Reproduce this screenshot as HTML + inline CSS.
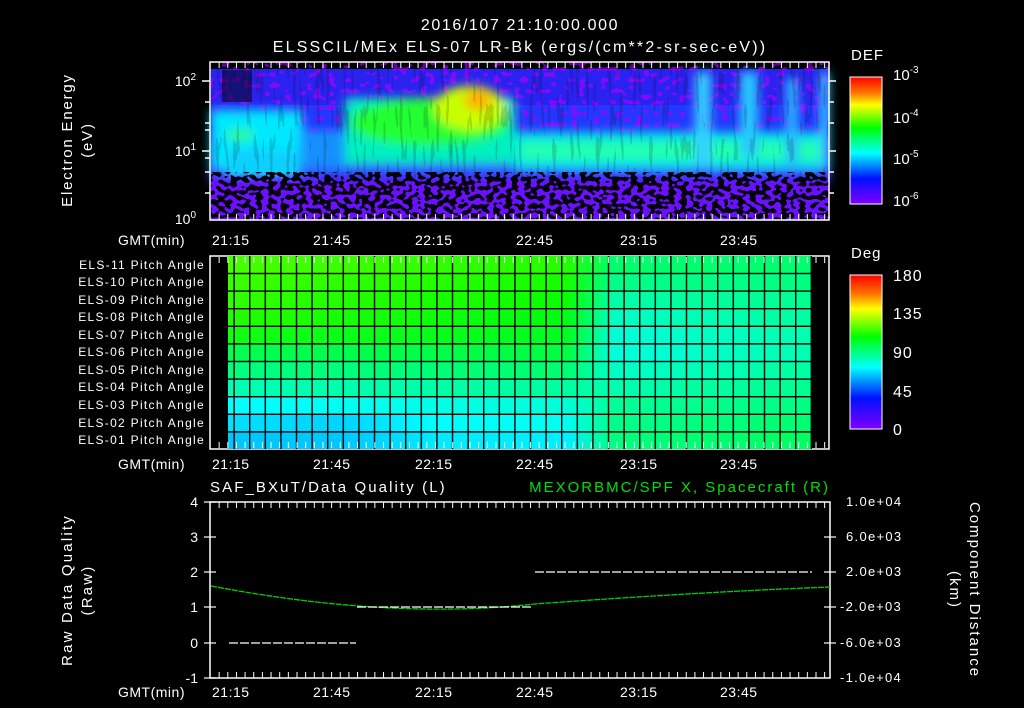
<!DOCTYPE html>
<html><head><meta charset="utf-8"><style>
html,body{margin:0;padding:0;background:#000;width:1024px;height:708px;overflow:hidden}
svg{display:block}
text{font-family:"Liberation Sans",sans-serif;fill:#fff}
</style></head><body>
<svg width="1024" height="708" viewBox="0 0 1024 708" xmlns="http://www.w3.org/2000/svg">
<defs>
<filter id="b4" filterUnits="userSpaceOnUse" x="150" y="40" width="760" height="200"><feGaussianBlur stdDeviation="5"/></filter>
<filter id="spk" filterUnits="userSpaceOnUse" x="211" y="172" width="618" height="48">
<feTurbulence type="fractalNoise" baseFrequency="0.16 0.22" numOctaves="1" seed="3"/>
<feColorMatrix type="matrix" values="0 0 0 0 0  0 0 0 0 0  0 0 0 0 0  1 0 0 0 0"/>
<feComponentTransfer><feFuncA type="discrete" tableValues="0 0 0 1 1 1"/></feComponentTransfer>
</filter>
<filter id="str" filterUnits="userSpaceOnUse" x="211" y="62" width="618" height="158">
<feTurbulence type="fractalNoise" baseFrequency="0.3 0.03" numOctaves="1" seed="7"/>
<feColorMatrix type="matrix" values="0 0 0 0 0  0 0 0 0 0  0 0 0 0 0  1 0 0 0 0"/>
<feComponentTransfer><feFuncA type="discrete" tableValues="0 0 0 0.15 0.3"/></feComponentTransfer>
</filter>
<filter id="pur" filterUnits="userSpaceOnUse" x="211" y="62" width="618" height="158">
<feTurbulence type="fractalNoise" baseFrequency="0.14 0.18" numOctaves="1" seed="11"/>
<feColorMatrix type="matrix" values="0 0 0 0 0.4  0 0 0 0 0  0 0 0 0 1  1 0 0 0 0"/>
<feComponentTransfer><feFuncA type="discrete" tableValues="0 0 0 0.8 1"/></feComponentTransfer>
</filter>
<linearGradient id="cb" x1="0" y1="0" x2="0" y2="1">
<stop offset="0" stop-color="#ff0000"/><stop offset="0.12" stop-color="#ff7000"/><stop offset="0.22" stop-color="#ffff00"/>
<stop offset="0.4" stop-color="#00ff00"/><stop offset="0.6" stop-color="#00ffff"/><stop offset="0.8" stop-color="#0010ff"/><stop offset="1" stop-color="#8000ff"/>
</linearGradient>
<linearGradient id="fade" x1="0" y1="0" x2="0" y2="1"><stop offset="0" stop-color="#6a10ff" stop-opacity="0"/><stop offset="0.25" stop-color="#6a10ff"/><stop offset="1" stop-color="#6a10ff"/></linearGradient>
<pattern id="vg" x="233.4" y="0" width="15.6" height="10" patternUnits="userSpaceOnUse"><rect x="0" y="0" width="1.4" height="10" fill="#000"/></pattern>
<linearGradient id="r1" x1="0" x2="1"><stop offset="0" stop-color="#48ff00"/><stop offset="0.58" stop-color="#22ff00"/><stop offset="0.66" stop-color="#00ff6a"/><stop offset="1" stop-color="#00ff70"/></linearGradient>
<linearGradient id="r2" x1="0" x2="1"><stop offset="0" stop-color="#3aff00"/><stop offset="0.58" stop-color="#15ff00"/><stop offset="0.66" stop-color="#00ff88"/><stop offset="1" stop-color="#00ff80"/></linearGradient>
<linearGradient id="r3" x1="0" x2="1"><stop offset="0" stop-color="#30ff00"/><stop offset="0.58" stop-color="#08ff00"/><stop offset="0.66" stop-color="#00ffa8"/><stop offset="1" stop-color="#00ff90"/></linearGradient>
<linearGradient id="r4" x1="0" x2="1"><stop offset="0" stop-color="#22ff00"/><stop offset="0.58" stop-color="#00ff10"/><stop offset="0.66" stop-color="#00ffc4"/><stop offset="1" stop-color="#00ffa0"/></linearGradient>
<linearGradient id="r5" x1="0" x2="1"><stop offset="0" stop-color="#10ff10"/><stop offset="0.58" stop-color="#00ff20"/><stop offset="0.66" stop-color="#00ffd8"/><stop offset="1" stop-color="#00ffb0"/></linearGradient>
<linearGradient id="r6" x1="0" x2="1"><stop offset="0" stop-color="#00ff50"/><stop offset="0.58" stop-color="#00ff40"/><stop offset="0.66" stop-color="#00ffdc"/><stop offset="1" stop-color="#00ffb0"/></linearGradient>
<linearGradient id="r7" x1="0" x2="1"><stop offset="0" stop-color="#00ff80"/><stop offset="0.58" stop-color="#00ff70"/><stop offset="0.66" stop-color="#00ffc8"/><stop offset="1" stop-color="#00ffa0"/></linearGradient>
<linearGradient id="r8" x1="0" x2="1"><stop offset="0" stop-color="#00ffb4"/><stop offset="0.58" stop-color="#00ffa0"/><stop offset="0.66" stop-color="#00ffb0"/><stop offset="1" stop-color="#00ff90"/></linearGradient>
<linearGradient id="r9" x1="0" x2="1"><stop offset="0" stop-color="#00ffff"/><stop offset="0.58" stop-color="#00ffd8"/><stop offset="0.66" stop-color="#00ff98"/><stop offset="1" stop-color="#00ff80"/></linearGradient>
<linearGradient id="r10" x1="0" x2="1"><stop offset="0" stop-color="#00e0ff"/><stop offset="0.2" stop-color="#00d4ff"/><stop offset="0.35" stop-color="#00ffff"/><stop offset="0.58" stop-color="#00fff0"/><stop offset="0.66" stop-color="#00ff88"/><stop offset="1" stop-color="#00ff70"/></linearGradient>
<linearGradient id="r11" x1="0" x2="1"><stop offset="0" stop-color="#00c8ff"/><stop offset="0.2" stop-color="#00c8ff"/><stop offset="0.35" stop-color="#00eaff"/><stop offset="0.58" stop-color="#00f0ff"/><stop offset="0.66" stop-color="#00ff80"/><stop offset="1" stop-color="#00ff60"/></linearGradient>
<pattern id="tkx" x="210" y="0" width="8.65" height="10" patternUnits="userSpaceOnUse"><rect x="0" y="0" width="1" height="10" fill="#fff"/></pattern>
</defs>

<text x="520" y="30" font-size="16" text-anchor="middle" letter-spacing="1.6">2016/107 21:10:00.000</text>
<text x="520" y="52" font-size="16" text-anchor="middle" letter-spacing="2.2">ELSSCIL/MEx ELS-07 LR-Bk  (ergs/(cm**2-sr-sec-eV))</text>

<!-- TOP PANEL -->
<g>
<rect x="211" y="69" width="618" height="151" fill="#2436ff"/>
<rect x="211" y="69" width="618" height="36" fill="#2a22f0"/>
<rect x="211" y="69" width="618" height="151" fill="#fff" filter="url(#pur)" opacity="0.8"/>
<g filter="url(#b4)">
<rect x="211" y="165" width="618" height="18" fill="#2a50ff"/>
<rect x="211" y="110" width="92" height="58" fill="#00e8ff"/>
<rect x="228" y="150" width="70" height="34" fill="#10d0ff"/>
<rect x="300" y="130" width="50" height="38" fill="#1890ff"/>
<rect x="345" y="98" width="170" height="66" fill="#00f0c0"/>
<rect x="515" y="132" width="314" height="36" fill="#00e8e8"/>
<rect x="520" y="142" width="300" height="18" fill="#20ffb0"/>
<rect x="695" y="72" width="16" height="95" fill="#30d0ff"/>
<rect x="740" y="72" width="18" height="85" fill="#28c8ff"/>
<rect x="786" y="78" width="12" height="85" fill="#28b8ff"/>
<rect x="820" y="72" width="9" height="95" fill="#30d0ff"/>
<ellipse cx="430" cy="122" rx="80" ry="24" fill="#20ff30"/>
<ellipse cx="240" cy="135" rx="14" ry="5" fill="#30ff60"/>
<ellipse cx="470" cy="108" rx="36" ry="22" fill="#c8ff00"/>
<ellipse cx="478" cy="100" rx="14" ry="10" fill="#ffb000"/>
</g>
<rect x="222" y="70" width="30" height="32" fill="#000" opacity="0.5"/>
<rect x="211" y="69" width="618" height="151" fill="#000" filter="url(#str)"/>
<rect x="211" y="172" width="618" height="48" fill="url(#fade)"/>
<rect x="211" y="172" width="618" height="48" fill="#000" filter="url(#spk)" opacity="0.95"/>
<rect x="210" y="62" width="619" height="158" fill="none" stroke="#fff" stroke-width="1.5"/>
<rect x="211" y="62" width="618" height="6" fill="url(#tkx)"/>
<rect x="211" y="214" width="618" height="6" fill="url(#tkx)"/>
<g stroke="#fff" stroke-width="1.5">
<line x1="202" y1="81" x2="210" y2="81"/><line x1="202" y1="151" x2="210" y2="151"/>
<line x1="205" y1="102" x2="210" y2="102"/><line x1="205" y1="123" x2="210" y2="123"/><line x1="205" y1="130" x2="210" y2="130"/>
<line x1="205" y1="172" x2="210" y2="172"/><line x1="205" y1="193" x2="210" y2="193"/><line x1="205" y1="158" x2="210" y2="158"/>
<line x1="829" y1="81" x2="836" y2="81"/><line x1="829" y1="151" x2="836" y2="151"/><line x1="829" y1="102" x2="834" y2="102"/><line x1="829" y1="123" x2="834" y2="123"/><line x1="829" y1="172" x2="834" y2="172"/><line x1="829" y1="193" x2="834" y2="193"/>
</g>
</g>
<text x="196" y="86" font-size="14" text-anchor="end">10<tspan dy="-6" font-size="10">2</tspan></text>
<text x="196" y="156" font-size="14" text-anchor="end">10<tspan dy="-6" font-size="10">1</tspan></text>
<text x="196" y="224" font-size="14" text-anchor="end">10<tspan dy="-6" font-size="10">0</tspan></text>
<text transform="translate(72,140) rotate(-90)" font-size="15" text-anchor="middle" letter-spacing="1.8">Electron Energy</text>
<text transform="translate(92,140) rotate(-90)" font-size="15" text-anchor="middle" letter-spacing="1.8">(eV)</text>

<g font-size="14" letter-spacing="0.5">
<text x="118" y="245">GMT(min)</text>
<text x="212" y="245">21:15</text><text x="313" y="245">21:45</text><text x="415" y="245">22:15</text><text x="516" y="245">22:45</text><text x="620" y="245">23:15</text><text x="720" y="245">23:45</text>
</g>

<text x="851" y="60" font-size="15" letter-spacing="1">DEF</text>
<rect x="850" y="77" width="32" height="127" fill="url(#cb)" stroke="#fff" stroke-width="1"/>
<g font-size="15">
<text x="893" y="80">10<tspan dy="-7" font-size="10">-3</tspan></text>
<text x="893" y="123">10<tspan dy="-7" font-size="10">-4</tspan></text>
<text x="893" y="164">10<tspan dy="-7" font-size="10">-5</tspan></text>
<text x="893" y="206">10<tspan dy="-7" font-size="10">-6</tspan></text>
</g>

<!-- MIDDLE PANEL -->
<rect x="210" y="256" width="619" height="193" fill="#000" stroke="#fff" stroke-width="1.5"/>
<g>
<rect x="228" y="256" width="584" height="17.6" fill="url(#r1)"/>
<rect x="228" y="273.6" width="584" height="17.6" fill="url(#r2)"/>
<rect x="228" y="291.2" width="584" height="17.6" fill="url(#r3)"/>
<rect x="228" y="308.8" width="584" height="17.6" fill="url(#r4)"/>
<rect x="228" y="326.4" width="584" height="17.6" fill="url(#r5)"/>
<rect x="228" y="344" width="584" height="17.6" fill="url(#r6)"/>
<rect x="228" y="361.6" width="584" height="17.6" fill="url(#r7)"/>
<rect x="228" y="379.2" width="584" height="17.6" fill="url(#r8)"/>
<rect x="228" y="396.8" width="584" height="17.6" fill="url(#r9)"/>
<rect x="228" y="414.4" width="584" height="17.6" fill="url(#r10)"/>
<rect x="228" y="432" width="584" height="17" fill="url(#r11)"/>
<rect x="233" y="256" width="579" height="193" fill="url(#vg)"/>
<g fill="#000">
<rect x="228" y="272.8" width="584" height="1.4"/><rect x="228" y="290.4" width="584" height="1.4"/><rect x="228" y="308" width="584" height="1.4"/>
<rect x="228" y="325.6" width="584" height="1.4"/><rect x="228" y="343.2" width="584" height="1.4"/><rect x="228" y="360.8" width="584" height="1.4"/>
<rect x="228" y="378.4" width="584" height="1.4"/><rect x="228" y="396" width="584" height="1.4"/><rect x="228" y="413.6" width="584" height="1.4"/>
<rect x="228" y="431.2" width="584" height="1.4"/>
</g>
<rect x="211" y="257" width="618" height="6" fill="url(#tkx)"/>
<rect x="211" y="442" width="618" height="6" fill="url(#tkx)"/>
</g>
<g font-size="12" text-anchor="end" letter-spacing="1.3">
<text x="205" y="269">ELS-11 Pitch Angle</text>
<text x="205" y="286">ELS-10 Pitch Angle</text>
<text x="205" y="304">ELS-09 Pitch Angle</text>
<text x="205" y="321">ELS-08 Pitch Angle</text>
<text x="205" y="339">ELS-07 Pitch Angle</text>
<text x="205" y="356">ELS-06 Pitch Angle</text>
<text x="205" y="374">ELS-05 Pitch Angle</text>
<text x="205" y="391">ELS-04 Pitch Angle</text>
<text x="205" y="409">ELS-03 Pitch Angle</text>
<text x="205" y="427">ELS-02 Pitch Angle</text>
<text x="205" y="444">ELS-01 Pitch Angle</text>
</g>
<g font-size="14" letter-spacing="0.5">
<text x="118" y="469">GMT(min)</text>
<text x="212" y="469">21:15</text><text x="313" y="469">21:45</text><text x="415" y="469">22:15</text><text x="516" y="469">22:45</text><text x="620" y="469">23:15</text><text x="720" y="469">23:45</text>
</g>

<text x="851" y="258" font-size="15" letter-spacing="1">Deg</text>
<rect x="850" y="275" width="32" height="154" fill="url(#cb)" stroke="#fff" stroke-width="1"/>
<g font-size="16" letter-spacing="1">
<text x="893" y="281">180</text><text x="893" y="319">135</text><text x="893" y="358">90</text><text x="893" y="397">45</text><text x="893" y="435">0</text>
</g>

<!-- BOTTOM PANEL -->
<text x="210" y="492" font-size="15" letter-spacing="2.1">SAF_BXuT/Data Quality (L)</text>
<text x="830" y="492" font-size="15" text-anchor="end" letter-spacing="2" style="fill:#00e000">MEXORBMC/SPF X, Spacecraft (R)</text>
<rect x="210" y="502" width="620" height="176" fill="none" stroke="#fff" stroke-width="1.5"/>
<rect x="211" y="502" width="619" height="6" fill="url(#tkx)"/>
<rect x="211" y="672" width="619" height="6" fill="url(#tkx)"/>
<g stroke="#fff" stroke-width="1.2">
<line x1="204" y1="502" x2="216" y2="502"/><line x1="204" y1="537" x2="216" y2="537"/><line x1="204" y1="572" x2="216" y2="572"/><line x1="204" y1="607" x2="216" y2="607"/><line x1="204" y1="643" x2="216" y2="643"/><line x1="204" y1="678" x2="216" y2="678"/>
<line x1="824" y1="537" x2="836" y2="537"/><line x1="824" y1="572" x2="836" y2="572"/><line x1="824" y1="607" x2="836" y2="607"/><line x1="824" y1="643" x2="836" y2="643"/>
</g>
<path d="M211 586 Q390 620 535 604 Q700 592 830 587" fill="none" stroke="#00d000" stroke-width="1.3" stroke-dasharray="6 1"/>
<g stroke="#fff" stroke-width="1.2" stroke-dasharray="9 2">
<line x1="229" y1="643" x2="356" y2="643"/>
<line x1="357" y1="607" x2="533" y2="607"/>
<line x1="535" y1="572" x2="812" y2="572"/>
</g>
<g font-size="14" text-anchor="end">
<text x="198" y="507">4</text><text x="198" y="542">3</text><text x="198" y="577">2</text><text x="198" y="612">1</text><text x="198" y="648">0</text><text x="198" y="683">-1</text>
</g>
<g font-size="13" letter-spacing="1.3">
<text x="846" y="506">1.0e+04</text><text x="846" y="541">6.0e+03</text><text x="846" y="576">2.0e+03</text><text x="840" y="611">-2.0e+03</text><text x="840" y="647">-6.0e+03</text><text x="840" y="682">-1.0e+04</text>
</g>
<text transform="translate(72,590) rotate(-90)" font-size="15" text-anchor="middle" letter-spacing="2.2">Raw Data Quality</text>
<text transform="translate(92,590) rotate(-90)" font-size="15" text-anchor="middle" letter-spacing="2.2">(Raw)</text>
<text transform="translate(970,590) rotate(90)" font-size="15" text-anchor="middle" letter-spacing="2">Component Distance</text>
<text transform="translate(950,590) rotate(90)" font-size="15" text-anchor="middle" letter-spacing="2">(km)</text>
<g font-size="14" letter-spacing="0.5">
<text x="118" y="697">GMT(min)</text>
<text x="212" y="697">21:15</text><text x="313" y="697">21:45</text><text x="415" y="697">22:15</text><text x="516" y="697">22:45</text><text x="620" y="697">23:15</text><text x="720" y="697">23:45</text>
</g>
</svg>
</body></html>
